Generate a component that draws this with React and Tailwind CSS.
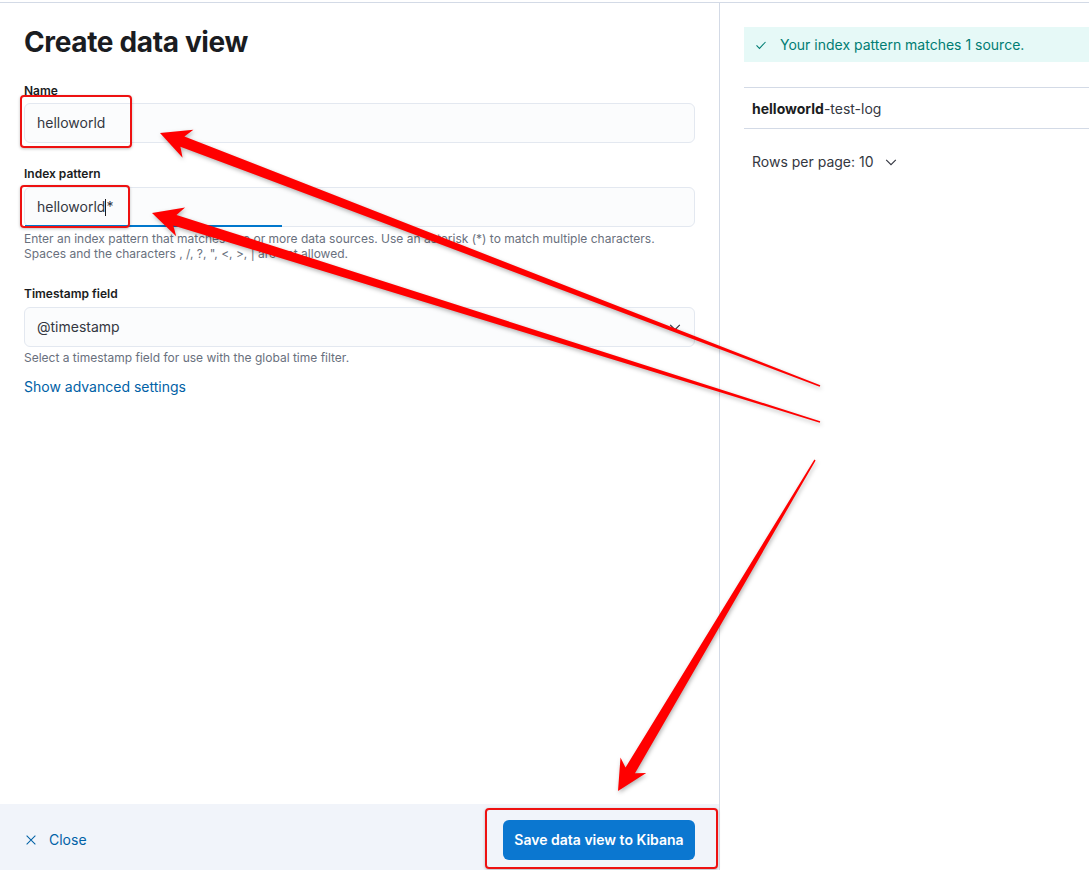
import React from "react";

function arrowPoints(tail, tip, tw, sw, hw, hl) {
  const dx = tip[0] - tail[0];
  const dy = tip[1] - tail[1];
  const len = Math.hypot(dx, dy);
  const ux = dx / len, uy = dy / len;
  const nx = -uy, ny = ux;
  const bx = tip[0] - ux * hl, by = tip[1] - uy * hl;
  const bx2 = tip[0] - ux * (hl * 0.8), by2 = tip[1] - uy * (hl * 0.8);
  const p = [
    [tail[0] + nx * tw / 2, tail[1] + ny * tw / 2],
    [bx2 + nx * sw / 2, by2 + ny * sw / 2],
    [bx + nx * hw / 2, by + ny * hw / 2],
    tip,
    [bx - nx * hw / 2, by - ny * hw / 2],
    [bx2 - nx * sw / 2, by2 - ny * sw / 2],
    [tail[0] - nx * tw / 2, tail[1] - ny * tw / 2],
  ];
  return p.map((q) => q[0].toFixed(1) + "," + q[1].toFixed(1)).join(" ");
}

const Chevron = ({ className }) => (
  <svg className={className} width="14" height="14" viewBox="0 0 16 16" fill="none" stroke="currentColor" strokeWidth="1.3">
    <path d="M2.5 5.5 L8 11 L13.5 5.5" />
  </svg>
);

export default function App() {
  const font = { fontFamily: "Inter, 'Noto Sans', sans-serif" };
  return (
    <div className="relative w-[1089px] h-[870px] bg-white overflow-hidden text-[#343741]" style={font}>
      <div className="h-[2px]" />
      <div className="h-px bg-[#d3dae6]" />
      <div className="flex h-[867px]">
        {/* Left panel */}
        <div className="w-[720px] border-r border-[#d3dae6] flex flex-col">
          <div className="flex-1 px-6 pt-[21px]">
            <h1 className="text-[28px] leading-9 font-bold text-[#1a1c21] tracking-[-0.35px]">Create data view</h1>

            <div className="mt-[23px] text-xs leading-4 font-semibold text-[#1a1c21]">Name</div>
            <div className="mt-[4px] h-10 rounded-md border border-[#e3e8f0] bg-[#fbfcfd] flex items-center px-3 text-sm text-[#343741]">
              helloworld
            </div>

            <div className="mt-[23px] text-xs leading-4 font-semibold text-[#1a1c21]">Index pattern</div>
            <div className="relative mt-[5px] h-10 rounded-md border border-[#e3e8f0] bg-[#fbfcfd] flex items-center px-3 text-sm text-[#343741]">
              <span>helloworld</span>
              <span className="inline-block w-px h-[17px] bg-[#1a1c21]" />
              <span>*</span>
              <div className="absolute left-0 bottom-[-1px] w-[257px] h-[2px] bg-[#0077cc]" />
            </div>
            <div className="mt-[4px] text-xs leading-[15px] text-[#69707d]">
              Enter an index pattern that matches one or more data sources. Use an asterisk (*) to match multiple characters.
              <br />
              Spaces and the characters , /, ?, ", &lt;, &gt;, | are not allowed.
            </div>

            <div className="mt-[25px] text-xs leading-4 font-semibold text-[#1a1c21]">Timestamp field</div>
            <div className="mt-[5px] h-10 rounded-md border border-[#e3e8f0] bg-[#fbfcfd] flex items-center justify-between px-3 text-sm text-[#343741]">
              <span>@timestamp</span>
              <Chevron className="text-[#343741]" />
            </div>
            <div className="mt-[3px] text-xs leading-4 text-[#69707d]">Select a timestamp field for use with the global time filter.</div>

            <div className="mt-[11px] text-sm leading-5 text-[#0061a6]">Show advanced settings</div>
          </div>

          <div className="h-[66px] bg-[#f1f4fa] flex items-center justify-between pl-6 pr-6 pt-[5px]">
            <div className="flex items-center gap-[11px] text-[#0061a6] text-sm">
              <svg width="14" height="14" viewBox="0 0 16 16" fill="none" stroke="currentColor" strokeWidth="1.2">
                <path d="M3 3 L13 13 M13 3 L3 13" />
              </svg>
              <span>Close</span>
            </div>
            <div className="h-10 w-[192px] rounded-md bg-[#0b77d0] text-white text-sm font-semibold flex items-center justify-center">
              Save data view to Kibana
            </div>
          </div>
        </div>

        {/* Right panel */}
        <div className="flex-1 pl-6 pt-6">
          <div className="h-[35px] bg-[#e6f9f7] flex items-center pl-[11px] text-sm text-[#017d73]">
            <svg width="12" height="12" viewBox="0 0 16 16" fill="none" stroke="currentColor" strokeWidth="1.4">
              <path d="M2 8.5 L6 12.5 L14 4" />
            </svg>
            <span className="ml-[13px]">Your index pattern matches 1 source.</span>
          </div>
          <div className="mt-[25px] h-px bg-[#d3dae6]" />
          <div className="h-10 flex items-center pl-2 pt-[2px] text-sm text-[#343741]">
            <span className="font-bold text-[#1a1c21]">helloworld</span>
            <span>-test-log</span>
          </div>
          <div className="h-px bg-[#d3dae6]" />
          <div className="mt-[23px] flex items-center pl-2 text-sm leading-5 text-[#343741]">
            <span>Rows per page: 10</span>
            <Chevron className="ml-[10px] text-[#343741]" />
          </div>
        </div>
      </div>

      {/* Annotations */}
      <div className="absolute left-[20px] top-[95px] w-[112px] h-[53px] border-2 border-[#ee1111] rounded-[4px] shadow-[0_1px_3px_rgba(0,0,0,0.25)] pointer-events-none" />
      <div className="absolute left-[20px] top-[185px] w-[110px] h-[43px] border-2 border-[#ee1111] rounded-[4px] shadow-[0_1px_3px_rgba(0,0,0,0.25)] pointer-events-none" />
      <div className="absolute left-[485px] top-[808px] w-[233px] h-[61px] border-2 border-[#ee1111] rounded-[4px] shadow-[0_1px_3px_rgba(0,0,0,0.25)] pointer-events-none" />

      <svg className="absolute left-0 top-0 pointer-events-none" width="1089" height="870" style={{ filter: "drop-shadow(1px 2px 2px rgba(0,0,0,0.3))" }}>
        <polygon fill="#ff0000" points={arrowPoints([820, 386], [160, 133], 1.5, 11, 30, 30)} />
        <polygon fill="#ff0000" points={arrowPoints([820, 422], [152, 213], 1.5, 11, 30, 30)} />
        <polygon fill="#ff0000" points={arrowPoints([815, 460], [618, 791], 1.5, 11, 30, 30)} />
      </svg>
    </div>
  );
}
